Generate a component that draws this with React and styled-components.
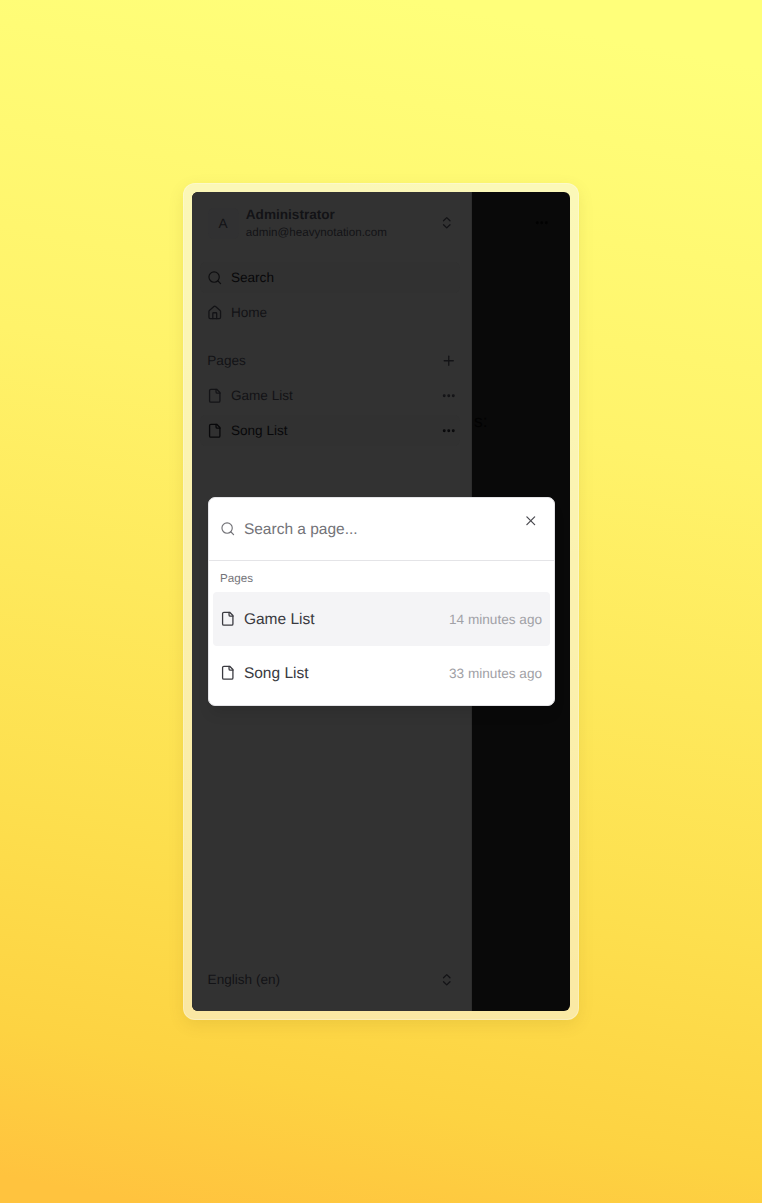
import React from "react";
import styled, { createGlobalStyle, css } from "styled-components";
import { Search, House, Plus, Ellipsis, ChevronsUpDown, X } from "lucide-react";

const GlobalStyle = createGlobalStyle`
  *, *::before, *::after { box-sizing: border-box; }
  body {
    margin: 0;
    font-family: "Liberation Sans", Arial, sans-serif;
    font-size: 13.6px;
    text-rendering: geometricPrecision;
  }
`;

const Backdrop = styled.div`
  display: flex;
  flex-direction: column;
  align-items: center;
  width: 762px;
  height: 1203px;
  padding-top: 183px;
  background: linear-gradient(191deg, #ffff7a 5%, #fff36a 35%, #fddf4e 70%, #fdd342 87%, #ffc33e 98%);
`;

const Frame = styled.div`
  width: 396px;
  height: 837px;
  padding: 8px;
  border: 1px solid rgba(255, 255, 255, 0.25);
  border-radius: 12px;
  background: rgba(248, 246, 240, 0.55);
  box-shadow: 0 5px 16px rgba(100, 80, 0, 0.1);
`;

const Screen = styled.div`
  position: relative;
  display: flex;
  width: 378px;
  height: 819px;
  overflow: hidden;
  border-radius: 6px;
  background: #090909;
  color: #000;
`;

const Sidebar = styled.aside`
  display: flex;
  flex: none;
  flex-direction: column;
  width: 280px;
  padding: 8px 11px 14.6px 7.6px;
  border-right: 1px solid #2d2d2d;
  background: #323232;
  color: #131316;
`;

const Account = styled.div`
  display: flex;
  align-items: center;
  height: 46px;
  padding: 0 6px 0 8px;
`;

const Avatar = styled.div`
  display: flex;
  align-items: center;
  justify-content: center;
  flex: none;
  width: 31px;
  height: 31px;
  margin-right: 7.2px;
  border-radius: 6px;
  background: #313132;
`;

const Identity = styled.div`
  flex: 1;
  padding-top: 2px;
`;

const Name = styled.div`
  font-weight: 700;
  line-height: 17px;
`;

const Email = styled.div`
  font-size: 11.63px;
  line-height: 19px;
`;

const Menu = styled.nav`
  display: flex;
  flex-direction: column;
  gap: 4px;
  margin-top: ${({ $top }) => $top}px;
`;

const MenuItem = styled.div`
  display: flex;
  align-items: center;
  gap: 8.1px;
  height: 31px;
  padding: 0 4px 0 7.7px;
  border-radius: 6px;
  ${({ $active }) =>
    $active &&
    css`
      background: #313131;
      color: #08080a;
    `}
`;

const Label = styled.span`
  flex: 1;
  white-space: nowrap;
`;

const LanguagePicker = styled.div`
  display: flex;
  align-items: center;
  height: 34px;
  margin-top: auto;
  padding: 0 6px 0 8px;
`;

const Icon = styled.span`
  display: flex;
  align-items: center;
  justify-content: center;
  flex: none;
  width: 15.5px;
  height: 16px;
`;

const Content = styled.main`
  flex: 1;
  display: flex;
  flex-direction: column;
  min-width: 0;
  color: #020202;
`;

const ContentBar = styled.div`
  display: flex;
  justify-content: flex-end;
  padding: 23px 21px 0 0;
`;

const ContentText = styled.p`
  margin: 181px 0 0 2px;
  font-size: 17.4px;
  line-height: 18px;
`;

const Dialog = styled.section`
  position: absolute;
  top: 305px;
  left: 16px;
  width: 347px;
  height: 209px;
  overflow: hidden;
  border: 1px solid #e4e4e7;
  border-radius: 7px;
  background: #fff;
  color: #3a3a40;
  box-shadow: 0 10px 14px -3px rgba(0, 0, 0, 0.1);
`;

const SearchField = styled.div`
  display: flex;
  align-items: center;
  gap: 8px;
  height: 63px;
  padding: 0 16px 0 11.4px;
  border-bottom: 1px solid #e4e4e7;
  color: #737378;
  font-size: 15.5px;
  line-height: 19px;
`;

const CloseButton = styled.span`
  display: flex;
  align-self: flex-start;
  margin-top: 15px;
  color: #4d4d53;
`;

const Results = styled.div`
  padding: 0 4px;
`;

const GroupTitle = styled.div`
  height: 31px;
  padding: 0 7px;
  color: #737378;
  font-size: 11.63px;
  line-height: 36px;
`;

const Result = styled.div`
  display: flex;
  align-items: center;
  gap: 8px;
  height: 54px;
  padding: 0 8px 0 7.4px;
  border-radius: 4px;
  background: ${({ $selected }) => ($selected ? "#f4f4f6" : "transparent")};
  font-size: 15.5px;
  line-height: 19px;
`;

const Time = styled.time`
  color: #a1a1a6;
  font-size: 13.6px;
`;

const PageIcon = () => (
  <Icon>
    <svg
      width="15.5"
      height="15.5"
      viewBox="0 0 24 24"
      fill="none"
      stroke="currentColor"
      strokeWidth="2"
      strokeLinecap="round"
      strokeLinejoin="round"
    >
      <path d="M15 2H6a2 2 0 0 0-2 2v16a2 2 0 0 0 2 2h12a2 2 0 0 0 2-2V7Z" />
      <path d="M14 2v4a2 2 0 0 0 2 2h4" />
    </svg>
  </Icon>
);

const results = [
  ["Game List", "14 minutes ago"],
  ["Song List", "33 minutes ago"],
];

export default function App() {
  return (
    <>
      <GlobalStyle />
      <Backdrop>
        <Frame>
          <Screen>
            <Sidebar>
              <Account>
                <Avatar>A</Avatar>
                <Identity>
                  <Name>Administrator</Name>
                  <Email>admin@heavynotation.com</Email>
                </Identity>
                <Icon><ChevronsUpDown size={15.5} /></Icon>
              </Account>
              <Menu $top={16}>
                <MenuItem $active>
                  <Icon><Search size={15.5} strokeWidth={1.8} color="#0e0e10" /></Icon>
                  <Label>Search</Label>
                </MenuItem>
                <MenuItem>
                  <Icon><House size={15.5} /></Icon>
                  <Label>Home</Label>
                </MenuItem>
              </Menu>
              <Menu $top={17}>
                <MenuItem>
                  <Label>Pages</Label>
                  <Icon><Plus size={15.5} /></Icon>
                </MenuItem>
                <MenuItem>
                  <PageIcon />
                  <Label>Game List</Label>
                  <Icon><Ellipsis size={15.5} strokeWidth={2.5} /></Icon>
                </MenuItem>
                <MenuItem $active>
                  <PageIcon />
                  <Label>Song List</Label>
                  <Icon><Ellipsis size={15.5} strokeWidth={2.5} /></Icon>
                </MenuItem>
              </Menu>
              <LanguagePicker>
                <Label>English (en)</Label>
                <Icon><ChevronsUpDown size={15.5} /></Icon>
              </LanguagePicker>
            </Sidebar>
            <Content>
              <ContentBar><Icon><Ellipsis size={15.5} strokeWidth={2.5} /></Icon></ContentBar>
              <ContentText>s:</ContentText>
            </Content>
            <Dialog>
              <SearchField>
                <Icon><Search size={15.5} strokeWidth={1.8} /></Icon>
                <Label>Search a page...</Label>
                <CloseButton><X size={15.5} /></CloseButton>
              </SearchField>
              <Results>
                <GroupTitle>Pages</GroupTitle>
                {results.map(([title, time], index) => (
                  <Result key={title} $selected={index === 0}>
                    <PageIcon />
                    <Label>{title}</Label>
                    <Time>{time}</Time>
                  </Result>
                ))}
              </Results>
            </Dialog>
          </Screen>
        </Frame>
      </Backdrop>
    </>
  );
}
